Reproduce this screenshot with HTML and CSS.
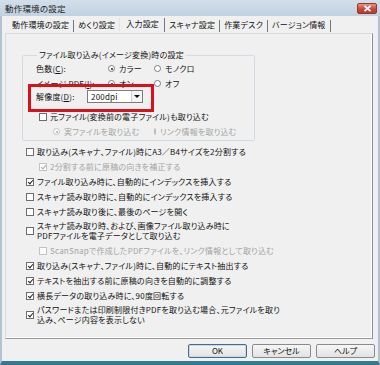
FILE: index.html
```html
<!DOCTYPE html>
<html lang="ja">
<head>
    <meta charset="UTF-8">
    <title>動作環境の設定</title>
    <link rel="stylesheet" href="styles.css">
</head>
<body>
    <div class="window">
        <div class="titlebar">
            <span class="title">動作環境の設定</span>
            <span class="close">
                <svg width="9" height="7" viewBox="0 0 9 7"><path d="M1.5 0.8 L7.5 6.2 M7.5 0.8 L1.5 6.2" stroke="#fff" stroke-width="1.8"/></svg>
            </span>
        </div>

        <div class="tabs">
            <span class="tab">動作環境の設定</span>
            <span class="tab no-sep">めくり設定</span>
            <span class="tab active">入力設定</span>
            <span class="tab">スキャナ設定</span>
            <span class="tab">作業デスク</span>
            <span class="tab">バージョン情報</span>
        </div>

        <div class="panel">
            <fieldset class="group">
                <legend>ファイル取り込み(イメージ変換)時の設定</legend>
                <div class="row">
                    <span class="label">色数(<u>C</u>):</span>
                    <span class="option"><span class="radio on"></span>カラー</span>
                    <span class="option"><span class="radio"></span>モノクロ</span>
                </div>
                <div class="row">
                    <span class="label">イメージ PDF(<u>I</u>):</span>
                    <span class="option"><span class="radio on"></span>オン</span>
                    <span class="option"><span class="radio"></span>オフ</span>
                </div>
                <div class="row highlight">
                    <span class="label short">解像度(<u>D</u>):</span>
                    <span class="select">200dpi<span class="arrow"></span></span>
                </div>
                <div class="row inner">
                    <span class="check"></span>元ファイル(変換前の電子ファイル)も取り込む
                </div>
                <div class="row sub disabled">
                    <span class="option wide"><span class="radio on"></span>実ファイルを取り込む</span>
                    <span class="option"><span class="radio"></span>リンク情報を取り込む</span>
                </div>
            </fieldset>

            <div class="options">
                <div class="row">
                    <span class="check"></span>取り込み(スキャナ、ファイル)時にA3／B4サイズを2分割する
                </div>
                <div class="row inner disabled">
                    <span class="check on"></span>2分割する前に原稿の向きを補正する
                </div>
                <div class="row">
                    <span class="check on"></span>ファイル取り込み時に、自動的にインデックスを挿入する
                </div>
                <div class="row">
                    <span class="check"></span>スキャナ読み取り時に、自動的にインデックスを挿入する
                </div>
                <div class="row">
                    <span class="check"></span>スキャナ読み取り後に、最後のページを開く
                </div>
                <div class="row double">
                    <span class="check"></span>
                    <span class="text">スキャナ読み取り時、および、画像ファイル取り込み時に<br>PDFファイルを電子データとして取り込む</span>
                </div>
                <div class="row inner disabled">
                    <span class="check"></span>ScanSnapで作成したPDFファイルを、リンク情報として取り込む
                </div>
                <div class="row">
                    <span class="check on"></span>取り込み(スキャナ、ファイル)時に、自動的にテキスト抽出する
                </div>
                <div class="row">
                    <span class="check on"></span>テキストを抽出する前に原稿の向きを自動的に調整する
                </div>
                <div class="row">
                    <span class="check on"></span>横長データの取り込み時に、90度回転する
                </div>
                <div class="row double">
                    <span class="check on"></span>
                    <span class="text">パスワードまたは印刷制限付きPDFを取り込む場合、元ファイルを取り<br>込み、ページ内容を表示しない</span>
                </div>
            </div>
        </div>

        <div class="buttons">
            <button class="button default">OK</button>
            <button class="button">キャンセル</button>
            <button class="button">ヘルプ</button>
        </div>
    </div>
</body>
</html>
```

FILE: styles.css
```css
* {
    box-sizing: border-box;
}

body {
    margin: 0;
    padding: 0;
    background-color: #f0f0f0;
    font-family: "Noto Sans CJK JP", sans-serif;
    font-size: 8px;
    font-feature-settings: "palt";
    letter-spacing: 0.2px;
    color: #111;
}

.window {
    width: 380px;
    height: 365px;
    background-color: #f0f0f0;
    border-left: 2px solid #b3c2d3;
    border-right: 2px solid #b3c2d3;
    border-bottom: 4px solid #347a90;
}

.titlebar {
    display: flex;
    align-items: flex-start;
    height: 16px;
    margin: 0 -2px;
    padding: 0 3px 0 5px;
    background: linear-gradient(#d3deea, #c2d0e1);
}

.title {
    font-size: 8.5px;
    line-height: 10px;
    margin-top: 3px;
    color: #1c1c1c;
}

.close {
    display: flex;
    align-items: center;
    justify-content: center;
    width: 20px;
    height: 11px;
    margin-left: auto;
    margin-top: 3px;
    background: linear-gradient(#e49486, #c8473a 55%, #b83a2e);
    border: 1px solid #8c3b31;
    border-radius: 2px;
}

/* tab strip */
.tabs {
    display: flex;
    height: 17px;
    padding-left: 6px;
    align-items: flex-end;
}

.tab {
    line-height: 10px;
    padding: 0 4px;
    margin-bottom: 1px;
    height: 12px;
    border-right: 1px solid #777;
}

.tab.no-sep {
    border-right: none;
}

.tab.active {
    height: 14px;
    padding: 1px 5px 0 6px;
    border-left: 1px solid #e4e4e4;
    border-right: 1px solid #777;
}

.panel {
    height: 306px;
    margin-left: 3px;
    margin-right: 5px;
    padding: 0 0 0 16px;
    border: 1px solid #dadada;
    border-right-color: #8c8c8c;
    border-bottom-color: #9a9a9a;
    box-shadow: inset -1px -1px 0 #fff;
}

/* group box */
.group {
    width: 233px;
    margin: 16px 0 0 0;
    padding: 1px 0 1px 13px;
    border: 1px solid #d3dbe2;
    border-radius: 2px;
}

.group legend {
    line-height: 10px;
    padding: 0 2px;
    margin-left: 1px;
}

.row {
    display: flex;
    align-items: center;
    height: 15px;
    line-height: 10px;
    white-space: nowrap;
}

.row.double {
    height: 24px;
}

.row.double .text {
    line-height: 10px;
}

.label {
    width: 72px;
}

.label.short {
    width: 51px;
}

.option {
    display: flex;
    align-items: center;
    width: 46px;
}

.option.wide {
    width: 101px;
}

.row.sub {
    padding-left: 17px;
}

.row.inner {
    padding-left: 3px;
}

.options .row.inner {
    padding-left: 13px;
}

.options {
    margin-top: 3px;
    padding-left: 4px;
}

.disabled {
    color: #a3a3a3;
}

/* radio buttons and checkboxes */
.radio {
    position: relative;
    width: 7px;
    height: 7px;
    margin-right: 4px;
    border: 1px solid #7d7d7d;
    border-radius: 50%;
    background-color: #fff;
}

.radio.on::after {
    content: "";
    position: absolute;
    left: 1.5px;
    top: 1.5px;
    width: 2px;
    height: 2px;
    border-radius: 50%;
    background-color: #222;
}

.disabled .radio {
    border-color: #bdbdbd;
}

.disabled .radio.on::after {
    background-color: #a8a8a8;
}

.check {
    position: relative;
    flex-shrink: 0;
    width: 8px;
    height: 8px;
    margin-right: 3px;
    border: 1px solid #6e6e6e;
    background-color: #fff;
}

.check.on::after {
    content: "";
    position: absolute;
    left: 1.5px;
    top: 0;
    width: 2px;
    height: 4px;
    border: solid #222;
    border-width: 0 1.3px 1.3px 0;
    transform: rotate(40deg);
}

.disabled .check {
    border-color: #c2c2c2;
}

.disabled .check.on::after {
    border-color: #a9a9a9;
}

/* resolution dropdown */
.select {
    position: relative;
    width: 56px;
    height: 13px;
    line-height: 11px;
    padding-left: 3px;
    border: 1px solid #7b7b7b;
    background-color: #fff;
}

.arrow {
    position: absolute;
    right: 0;
    top: 0;
    width: 11px;
    height: 11px;
    background-color: #f4f4f4;
    border-left: 1px solid #d0d0d0;
}

.arrow::after {
    content: "";
    position: absolute;
    left: 2px;
    top: 4px;
    border-left: 3px solid transparent;
    border-right: 3px solid transparent;
    border-top: 3px solid #111;
}

/* red annotation frame */
.highlight {
    position: relative;
    margin-top: -2px;
    margin-bottom: 5px;
}

.highlight::after {
    content: "";
    position: absolute;
    left: -8px;
    top: -5px;
    width: 120px;
    height: 22px;
    border: 3px solid #d8121b;
}

/* dialog buttons */
.buttons {
    display: flex;
    justify-content: flex-end;
    gap: 5px;
    padding-right: 3px;
    margin-top: 5px;
}

.button {
    width: 59px;
    height: 14px;
    padding: 0;
    font-family: "Noto Sans CJK JP", sans-serif;
    font-size: 8px;
    font-feature-settings: "palt";
    line-height: 10px;
    color: #111;
    border: 1px solid #8a8a8a;
    border-radius: 2px;
    background: linear-gradient(#f6f6f6, #e2e2e2);
}

.button.default {
    border-color: #4c6a8a;
    box-shadow: inset 0 0 0 1px #c6d8ea;
}
```
